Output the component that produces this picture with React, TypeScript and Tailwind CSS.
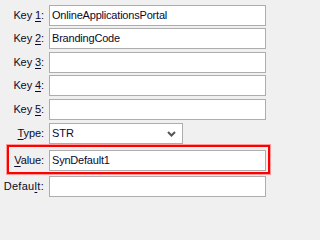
import React from 'react'

const font = { fontFamily: '"Liberation Sans", Arial, sans-serif' }

function Label({ pre, acc, post, className = 'w-[45px]' }: { pre: string; acc: string; post: string; className?: string }) {
  return (
    <div className={`${className} shrink-0 text-right text-[11px] tracking-[-0.1px] text-[#0a0a28] pr-[1px]`}>
      {pre}
      <span className="underline underline-offset-[2px]">{acc}</span>
      {post}
    </div>
  )
}

function Field({ value = '' }: { value?: string }) {
  return (
    <div className="ml-[4px] h-[21px] w-[217px] border border-[#adadad] bg-white px-[2px] flex items-center text-[11px] tracking-[-0.2px] text-[#0a0a30]">
      {value}
    </div>
  )
}

export default function App() {
  const keys = [
    { n: '1', v: 'OnlineApplicationsPortal', mt: 'mt-[5px]' },
    { n: '2', v: 'BrandingCode', mt: 'mt-[2px]' },
    { n: '3', v: '', mt: 'mt-[3px]' },
    { n: '4', v: '', mt: 'mt-[2px]' },
    { n: '5', v: '', mt: 'mt-[3px]' },
  ]

  return (
    <div className="min-w-[271px] min-h-screen bg-[#f0f0f0] flex flex-col" style={font}>
      {keys.map(k => (
        <div key={k.n} className={`flex items-center ${k.mt}`}>
          <Label pre="Key " acc={k.n} post=":" />
          <Field value={k.v} />
        </div>
      ))}

      {/* Type */}
      <div className="flex items-center mt-[3px]">
        <Label pre="" acc="T" post="ype:" />
        <div className="ml-[4px] h-[21px] w-[134px] border border-[#adadad] bg-white pl-[2px] pr-[6px] flex items-center justify-between text-[11px] text-[#0a0a30]">
          <span>STR</span>
          <svg width="9" height="6" viewBox="0 0 9 6" className="mt-[1px]">
            <path d="M1 1 L4.5 4.5 L8 1" fill="none" stroke="#555" strokeWidth="2" />
          </svg>
        </div>
      </div>

      {/* Value, highlighted */}
      <div className="ml-[7px] mt-[1px] w-[263px] border-2 border-[#ff0000] shadow-[0_0_0_1px_#ff9a9a] pt-[3px] pb-[1px] flex items-center">
        <Label pre="" acc="V" post="alue:" className="w-[36px]" />
        <Field value="SynDefault1" />
      </div>

      {/* Default */}
      <div className="flex items-center mt-[2px]">
        <Label pre="Defau" acc="l" post="t:" className="w-[45px] tracking-[0.3px]" />
        <Field />
      </div>
    </div>
  )
}
